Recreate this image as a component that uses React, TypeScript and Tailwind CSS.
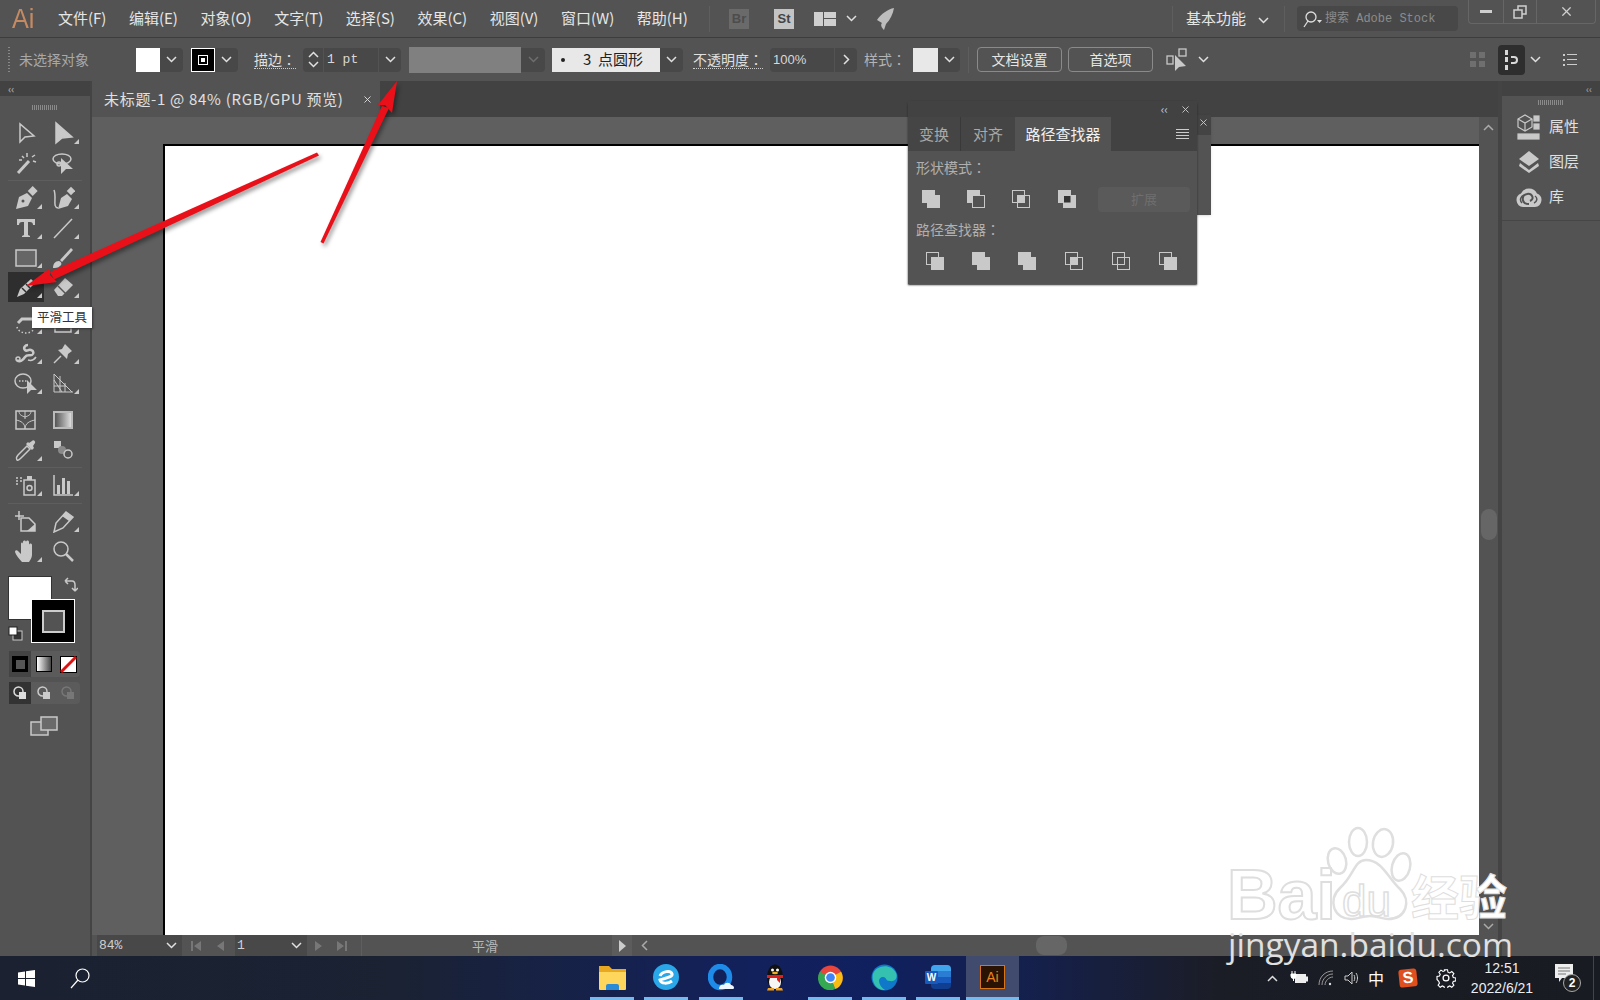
import type { ReactNode } from 'react';
import { X } from 'lucide-react';

const CJK = 'font-["Noto_Sans_CJK_SC","Liberation_Sans",sans-serif]';
const MONO = 'font-["Liberation_Mono","Noto_Sans_CJK_SC",monospace]';
const G = '#c9c9c9';

// ── Small shared bits ────────────────────────────────────────────────────────
function Chev({ color = '#e0e0e0', up = false }: { color?: string; up?: boolean }) {
  return (
    <svg width="11" height="7" viewBox="0 0 11 7">
      <polyline points={up ? '1,6 5.5,1.5 10,6' : '1,1 5.5,5.5 10,1'} fill="none" stroke={color} strokeWidth="1.5" />
    </svg>
  );
}

function Drop({ w = 23, color }: { w?: number; color?: string }) {
  return (
    <div className="flex h-[24px] items-center justify-center rounded-r-sm bg-[#484848]" style={{ width: w }}>
      <Chev color={color} />
    </div>
  );
}

// the fullwidth colon sits centred in the TC face, as it does in the screenshot
function Colon() {
  return <span className='font-["Noto_Sans_CJK_TC",sans-serif]'>：</span>;
}

function Gripper() {
  return <div className="h-[5px] w-[26px] bg-[repeating-linear-gradient(90deg,#8a8a8a_0_1px,transparent_1px_2px)]" />;
}

function Tool({ children, corner = true, active = false }: { children: ReactNode; corner?: boolean; active?: boolean }) {
  return (
    <div className={`relative flex h-full w-[36px] items-center justify-center ${active ? 'bg-[#2e2e2e]' : ''}`}>
      {children}
      {corner && <div className="absolute bottom-[4px] right-[2px] h-0 w-0 border-b-[5px] border-l-[5px] border-b-[#c9c9c9] border-l-transparent" />}
    </div>
  );
}

function Row({ h = 30, children }: { h?: number; children: ReactNode }) {
  return (
    <div className="flex gap-px pl-2" style={{ height: h }}>
      {children}
    </div>
  );
}

function Sep() {
  return <div className="mx-2 my-[2px] h-px bg-[#5e5e5e]" />;
}

function Ico({ children, s = 24 }: { children: ReactNode; s?: number }) {
  return (
    <svg width={s} height={s} viewBox="0 0 24 24" fill="none" stroke={G} strokeWidth="1.5">
      {children}
    </svg>
  );
}

// ── Left tool bar ────────────────────────────────────────────────────────────
function ToolBar() {
  return (
    <aside className="flex w-[92px] shrink-0 flex-col border-r-2 border-[#444] bg-[#535353]">
      <div className="flex h-[15px] items-center bg-[#424242] pl-2 text-[10px] leading-none text-[#aaa]">‹‹</div>
      <div className="flex h-[22px] items-center justify-center">
        <Gripper />
      </div>
      <Row>
        <Tool corner={false}><Ico><polygon points="6,3 6,21 11,16 20,15" /></Ico></Tool>
        <Tool><Ico><polygon points="5,2 5,22 11,17 21,16" fill={G} /></Ico></Tool>
      </Row>
      <Row>
        <Tool corner={false}><Ico><path d="M4 22 15 10" strokeWidth="3" /><path d="M8 5l2 2M5 9l3 0M13 2l0 4M18 6l3-2M19 10l3 1" /></Ico></Tool>
        <Tool corner={false}><Ico><ellipse cx="11" cy="8" rx="9" ry="5" /><circle cx="8" cy="13" r="2" /><polygon points="10,7 10,23 15,18 22,18" fill={G} stroke="none" /></Ico></Tool>
      </Row>
      <Sep />
      <Row>
        <Tool><Ico><path d="M2 23 5 11 13 7 18 12 14 20Z" fill={G} stroke="none" /><rect x="15" y="1" width="7" height="7" transform="rotate(45 18 5)" fill={G} stroke="none" /><circle cx="9" cy="15" r="1.5" fill="#535353" stroke="none" /></Ico></Tool>
        <Tool><Ico><path d="M7 22C1 21 6 12 3 4" /><path d="M7 23 10 12 16 8 21 13 17 20Z" fill={G} stroke="none" /><rect x="17" y="2" width="6" height="6" transform="rotate(45 20 5)" fill={G} stroke="none" /></Ico></Tool>
      </Row>
      <Row>
        <Tool><svg width="24" height="24" viewBox="0 0 24 24" fill={G}><path d="M3 3h18v6h-2c0-2-1-3-3-3h-2v13l2 1v1H8v-1l2-1V6H8C6 6 5 7 5 9H3Z" /></svg></Tool>
        <Tool><Ico s={24}><path d="M3 22 21 3" /></Ico></Tool>
      </Row>
      <Row h={29}>
        <Tool><svg width="22" height="18" viewBox="0 0 22 18"><rect x="1" y="1" width="20" height="16" fill="#666" stroke={G} strokeWidth="1.5" /></svg></Tool>
        <Tool><Ico><path d="M2 22c0-4 2-7 6-7 3 1 3 4 1 5-2 2-5 2-7 2Z" fill={G} stroke="none" /><path d="M9 14 20 2l2 2-11 12Z" fill={G} stroke="none" /></Ico></Tool>
      </Row>
      <Row>
        <Tool active><Ico><path d="M3 22 6 14 17 4 21 8 10 19Z" fill={G} stroke="none" /><path d="M8 13l4 4M12 9l4 4" stroke="#2e2e2e" /></Ico></Tool>
        <Tool><Ico><path d="M3 15 14 3 22 10 11 21H7Z" fill={G} stroke="none" /><path d="M7 11l8 8" stroke="#535353" /></Ico></Tool>
      </Row>
      <div className="h-[6px]" />
      <Row>
        <Tool><Ico><path d="M18 8H8L4 12" strokeWidth="3" /><path d="M3 16a9 7 0 0 0 17 2" strokeDasharray="1.5 2" /></Ico></Tool>
        <Tool><Ico><rect x="4" y="8" width="16" height="13" /></Ico></Tool>
      </Row>
      <Row>
        <Tool><Ico><path d="M3 19c3 3 6 0 8-3s5-1 7-2 2-4-1-5-4 2-6 0 0-5 3-5" strokeWidth="2.500" /><circle cx="4" cy="18" r="2" /><path d="M14 19c3 1 6 0 8-3" /></Ico></Tool>
        <Tool><Ico><path d="M3 22 10 15" /><path d="M7 9 16 18 17 13 21 10 14 3 11 8Z" fill={G} stroke="none" /></Ico></Tool>
      </Row>
      <Row>
        <Tool><Ico><ellipse cx="9" cy="10" rx="8" ry="7" /><path d="M5 10h8" strokeDasharray="1.5 1.5" /><polygon points="13,9 13,23 17,19 23,19" fill={G} stroke="none" /></Ico></Tool>
        <Tool><Ico><path d="M3 3v18h19M3 3l18 18M3 9l8 12M3 15h12M9 5v16M14 12v9" strokeWidth="1" /></Ico></Tool>
      </Row>
      <div className="h-[7px]" />
      <Row>
        <Tool corner={false}><Ico><rect x="2" y="3" width="19" height="18" /><path d="M11 21c0-6-4-8-9-9M11 21c0-6 5-8 10-9M11 3v8M5 3c0 4 3 5 6 6M17 3c0 4-3 5-6 6" strokeWidth="1" /></Ico></Tool>
        <Tool corner={false}><div className="h-[18px] w-[20px] border-2 border-[#bbb] bg-[linear-gradient(90deg,#555,#ddd)]" /></Tool>
      </Row>
      <Row>
        <Tool><Ico><path d="M3 22c-1-2 0-4 1-5L13 8l3 3-9 9c-1 1-3 3-4 2Z" /><path d="M12 6l6 6 2-2-1-2 2-3c1-2-2-4-3-2l-3 2-1-1Z" fill={G} stroke="none" /></Ico></Tool>
        <Tool corner={false}><Ico><rect x="3" y="3" width="7" height="7" fill={G} stroke="none" /><circle cx="11" cy="12" r="4" fill="#8a8a8a" stroke="none" /><circle cx="17" cy="16" r="4" /></Ico></Tool>
      </Row>
      <Sep />
      <Row>
        <Tool><Ico><path d="M2 5h2M6 5h2M2 8h2M6 8h2M2 11h2" /><rect x="10" y="7" width="11" height="15" /><circle cx="15.5" cy="15" r="2.5" /><rect x="13" y="3" width="5" height="4" fill={G} stroke="none" /></Ico></Tool>
        <Tool><Ico><path d="M3 2v20h19" /><rect x="6" y="12" width="3" height="9" fill={G} stroke="none" /><rect x="11" y="5" width="3" height="16" fill={G} stroke="none" /><rect x="16" y="8" width="3" height="13" fill={G} stroke="none" /></Ico></Tool>
      </Row>
      <div className="h-px" />
      <Sep />
      <Row>
        <Tool corner={false}><Ico><path d="M1 7h9M5 2v9" /><path d="M7 9h8l6 6v7H7Z" /><path d="M21 15v7h-8Z" fill={G} stroke="none" /></Ico></Tool>
        <Tool><Ico><path d="M3 23 5 14 15 3 22 8 12 19Z" /><path d="M15 3 22 8 18 12 11 7Z" fill={G} stroke="none" /></Ico></Tool>
      </Row>
      <Row>
        <Tool><svg width="24" height="24" viewBox="0 0 24 24" fill={G}><path d="M8 23C5 20 2 16 1 13c0-2 2-2 3-1l3 3V5c0-2 2-2 2 0v5V3c0-2 3-2 3 0v7V3c0-2 3-2 3 0v8V6c0-2 3-2 3 0v10c0 3-2 5-3 7Z" /></svg></Tool>
        <Tool corner={false}><Ico><circle cx="10" cy="10" r="7" /><path d="M15 15 22 22" strokeWidth="2.5" /></Ico></Tool>
      </Row>

      {/* Fill and stroke */}
      <div className="relative ml-2 mt-[10px] h-[66px] w-[74px]">
        <div className="h-[44px] w-[44px] border border-[#333] bg-white" />
        <div className="absolute left-[23px] top-[23px] flex h-[44px] w-[44px] items-center justify-center border border-white bg-black">
          <div className="h-[23px] w-[23px] border-2 border-[#ccc] bg-[#535353]" />
        </div>
        <svg className="absolute left-[56px] top-[1px]" width="14" height="16" viewBox="0 0 14 16" fill="none" stroke={G} strokeWidth="1.5">
          <path d="M1 4h7c2 0 3 2 3 4v5M1 4l3-3M1 4l3 3M11 14l3-3M11 14l-3-3" />
        </svg>
        <svg className="absolute left-0 top-[50px]" width="15" height="15" viewBox="0 0 15 15">
          <rect x="5" y="5" width="9" height="9" fill="#333" stroke={G} />
          <rect x="1" y="1" width="8" height="8" fill="#fff" stroke="#222" />
        </svg>
      </div>

      <div className="ml-[9px] mt-[9px] flex h-[26px] w-[71px] rounded-sm bg-[#5b5b5b]">
        <div className="flex h-full w-[22px] items-center justify-center bg-[#444]"><div className="flex h-[16px] w-[16px] items-center justify-center bg-black"><div className="h-[9px] w-[9px] bg-[#555]" /></div></div>
        <div className="flex h-full w-[25px] items-center justify-center"><div className="h-[16px] w-[16px] border border-black bg-[linear-gradient(90deg,#fff,#444)]" /></div>
        <div className="flex h-full w-[24px] items-center justify-center">
          <svg width="17" height="17" viewBox="0 0 17 17"><rect x="0.5" y="0.5" width="16" height="16" fill="#fff" stroke="#000" /><path d="M1 16 16 1" stroke="#e01010" strokeWidth="3" /></svg>
        </div>
      </div>
      <div className="ml-[9px] mt-[5px] flex h-[22px] w-[71px] rounded-sm bg-[#5b5b5b]">
        <div className="flex h-full w-[22px] items-center justify-center bg-[#333]"><DrawMode c="#ddd" /></div>
        <div className="flex h-full w-[25px] items-center justify-center"><DrawMode c="#ccc" /></div>
        <div className="flex h-full w-[24px] items-center justify-center"><DrawMode c="#777" /></div>
      </div>
      <div className="mt-[12px] flex justify-center pl-[1px] pr-[3px]">
        <svg width="28" height="20" viewBox="0 0 28 20" fill="#6a6a6a" stroke={G} strokeWidth="1.5">
          <rect x="1" y="6" width="17" height="13" />
          <rect x="11" y="1" width="16" height="13" />
        </svg>
      </div>
    </aside>
  );
}

function DrawMode({ c }: { c: string }) {
  return (
    <svg width="14" height="14" viewBox="0 0 14 14">
      <circle cx="5.5" cy="5.5" r="4.5" fill="none" stroke={c} strokeWidth="1.5" />
      <rect x="6" y="6" width="7" height="7" fill={c} />
    </svg>
  );
}

// ── Pathfinder buttons ───────────────────────────────────────────────────────
function Pf({ back, front, mid, open = false }: { back: boolean; front: boolean; mid?: string; open?: boolean }) {
  return (
    <svg width="18" height="18" viewBox="0 0 18 18">
      <rect x="0.5" y="0.5" width="12" height="12" fill={back ? G : open ? 'none' : '#535353'} stroke={G} />
      <rect x="5.5" y="5.5" width="12" height="12" fill={front ? G : open ? 'none' : '#535353'} stroke={G} />
      {mid && <rect x="6" y="6" width="6.500" height="6.500" fill={mid} />}
    </svg>
  );
}

function FloatingPanel() {
  return (
    <>
      {/* The collapsed panel peeking out behind */}
      <div className="absolute left-[1190px] top-[115px] h-[100px] w-[21px] bg-[#535353] shadow">
        <div className="flex h-[20px] items-start justify-end bg-[#444] pr-[2px] pt-[2px] text-[#ccc]"><X size={11} /></div>
      </div>
      <div className={`absolute left-[908px] top-[101px] h-[183px] w-[289px] rounded-t-sm bg-[#535353] shadow-[0_1px_2px_#222] ${CJK}`}>
        <div className="flex h-[16px] items-center justify-end gap-[12px] bg-[#424242] pr-[6px] text-[#ccc]">
          <span className="text-[12px] leading-none">‹‹</span>
          <X size={11} />
        </div>
        <div className="flex h-[34px] bg-[#424242] text-[15px] leading-[34px]">
          <div className="w-[53px] border-r border-[#393939] bg-[#454545] text-center text-[#a8a8a8]">变换</div>
          <div className="w-[54px] bg-[#454545] text-center text-[#a8a8a8]">对齐</div>
          <div className="w-[96px] bg-[#535353] text-center text-[#f0f0f0]">路径查找器</div>
          <div className="flex flex-1 items-center justify-end pr-[8px]">
            <div className="flex w-[13px] flex-col gap-[2px]">
              <div className="h-px bg-[#ccc]" /><div className="h-px bg-[#ccc]" /><div className="h-px bg-[#ccc]" /><div className="h-px bg-[#ccc]" />
            </div>
          </div>
        </div>
        <div className="px-[8px] pt-[6px] text-[14px] leading-[20px] text-[#b0b0b0]">形状模式<Colon /></div>
        <div className="mt-[9px] flex h-[26px] items-center pl-[14px]">
          <div className="flex w-[45px]"><Pf back front /></div>
          <div className="flex w-[45px]"><Pf back front={false} /></div>
          <div className="flex w-[46px]"><Pf back={false} front={false} mid={G} open /></div>
          <div className="flex w-[40px]"><Pf back front mid="#333" /></div>
          <div className="flex h-[25px] w-[92px] items-center justify-center rounded-sm bg-[#5a5a5a] text-[13px] text-[#6f6f6f]">扩展</div>
        </div>
        <div className="px-[8px] pt-[7px] text-[14px] leading-[20px] text-[#b0b0b0]">路径查找器<Colon /></div>
        <div className="mt-[13px] flex items-center pl-[18px]">
          <div className="flex w-[46px]"><Pf back={false} front /></div>
          <div className="flex w-[46px]"><Pf back front /></div>
          <div className="flex w-[47px]"><Pf back front /></div>
          <div className="flex w-[47px]"><Pf back={false} front={false} mid={G} open /></div>
          <div className="flex w-[47px]"><Pf back={false} front={false} open /></div>
          <div className="flex"><Pf back={false} front /></div>
        </div>
      </div>
    </>
  );
}

// ── Top bars ─────────────────────────────────────────────────────────────────
const menus = ['文件(F)', '编辑(E)', '对象(O)', '文字(T)', '选择(S)', '效果(C)', '视图(V)', '窗口(W)', '帮助(H)'];

function MenuBar() {
  return (
    <header className={`flex h-[38px] shrink-0 items-center border-b border-[#3d3d3d] bg-[#535353] ${CJK}`}>
      <div className="ml-[12px] w-[46px] origin-left scale-x-90 font-['Liberation_Sans',sans-serif] text-[28px] leading-none text-[#c58a62]">Ai</div>
      <nav className="flex w-[651px] gap-[22.5px] text-[15px] text-[#e6e6e6]">
        {menus.map(m => (
          <span key={m}>{m}</span>
        ))}
      </nav>
      <div className="h-[26px] w-px bg-[#5e5e5e]" />
      <div className="ml-[19px] flex h-[20px] w-[20px] items-center justify-center bg-[#6a6a6a] font-['Liberation_Sans',sans-serif] text-[13px] font-bold text-[#4d4d4d]">Br</div>
      <div className="ml-[25px] flex h-[20px] w-[20px] items-center justify-center bg-[#c4c4c4] font-['Liberation_Sans',sans-serif] text-[13px] font-bold text-[#444]">St</div>
      <svg className="ml-[20px]" width="22" height="14" viewBox="0 0 22 14" fill="#cfcfcf">
        <rect width="9" height="14" /><rect x="10" width="12" height="6" /><rect x="10" y="7" width="12" height="7" />
      </svg>
      <div className="ml-[10px]"><Chev /></div>
      <svg className="ml-[17px]" width="24" height="24" viewBox="0 0 24 24" fill="#bdbdbd">
        <path d="M20 1C14 2 7 7 3 13l5 3C6 18 8 21 10 23l2-6c4-4 7-10 8-16Z" />
      </svg>
      <div className="flex-1" />
      <div className="h-[26px] w-px bg-[#5e5e5e]" />
      <span className="ml-[13px] text-[15px] text-[#e6e6e6]">基本功能</span>
      <div className="ml-[12px] mt-[4px]"><Chev /></div>
      <div className="ml-[15px] h-[26px] w-px bg-[#5e5e5e]" />
      <div className={`ml-[12px] flex h-[25px] w-[161px] items-center rounded-sm bg-[#484848] pl-[6px] text-[12px] text-[#8c8c8c] ${MONO}`}>
        <svg width="20" height="18" viewBox="0 0 20 18" fill="none" stroke="#ddd" strokeWidth="1.3">
          <circle cx="8" cy="7" r="5" /><path d="M5 11 1 17" /><path d="M14 10h5l-2.5 3Z" fill="#ddd" stroke="none" />
        </svg>
        <span className="ml-[2px]">搜索 Adobe Stock</span>
      </div>
      <div className="mb-[13px] ml-[10px] mr-[4px] flex h-[24px] w-[128px] rounded-b-sm border border-t-0 border-[#666] text-[#cfcfcf]">
        <div className="flex w-[35px] items-center justify-center border-r border-[#666]"><div className="h-[3px] w-[12px] bg-[#cfcfcf]" /></div>
        <div className="flex w-[33px] items-center justify-center border-r border-[#666]">
          <svg width="14" height="14" viewBox="0 0 14 14" fill="none" stroke="#cfcfcf" strokeWidth="1.5"><rect x="1" y="5" width="8" height="8" /><path d="M5 5V1h8v8H9" /></svg>
        </div>
        <div className="flex flex-1 items-center justify-center"><X size={15} strokeWidth={2} /></div>
      </div>
    </header>
  );
}

function ControlBar() {
  const label = 'border-b border-dotted border-[#ccc] text-[14px] leading-[18px] text-[#e0e0e0]';
  return (
    <div className={`flex h-[43px] shrink-0 items-center bg-[#535353] ${CJK}`}>
      <div className="ml-[8px] h-[26px] w-[2px] bg-[repeating-linear-gradient(180deg,#888_0_1px,transparent_1px_3px)]" />
      <span className="ml-[9px] w-[117px] text-[14px] text-[#a8a8a8]">未选择对象</span>
      <div className="h-[24px] w-[24px] bg-white" />
      <Drop />
      <div className="ml-[8px] flex h-[24px] w-[24px] items-center justify-center border border-white bg-black">
        <div className="flex h-[10px] w-[10px] items-center justify-center border border-white"><div className="h-[4px] w-[4px] bg-white" /></div>
      </div>
      <Drop />
      <span className={`ml-[16px] ${label}`}>描边<Colon /></span>
      <div className="ml-[7px] flex h-[24px] w-[20px] flex-col items-center justify-center gap-[3px] rounded-l-sm bg-[#484848]">
        <Chev up /><Chev />
      </div>
      <div className={`ml-px flex h-[24px] w-[54px] items-center bg-[#484848] pl-[3px] text-[13px] text-[#d8d8d8] ${MONO}`}>1 pt</div>
      <div className="ml-px"><Drop w={22} /></div>
      <div className="ml-[8px] h-[26px] w-[112px] bg-[#808080]" />
      <Drop w={24} color="#6e6e6e" />
      <div className="ml-[7px] flex h-[24px] w-[108px] items-center whitespace-pre bg-[#e8e8e8] pl-[9px] text-[15px] text-[#222]">
        <div className="mr-[18px] h-[4px] w-[4px] rounded-full bg-[#222]" />3  点圆形
      </div>
      <Drop />
      <span className={`ml-[10px] ${label}`}>不透明度<Colon /></span>
      <div className="ml-[7px] flex h-[24px] w-[64px] items-center rounded-l-sm bg-[#484848] pl-[3px] font-['Liberation_Sans',sans-serif] text-[13px] text-[#d8d8d8]">100%</div>
      <div className="ml-px flex h-[24px] w-[22px] items-center justify-center rounded-r-sm bg-[#484848]">
        <div className="-rotate-90"><Chev /></div>
      </div>
      <span className="ml-[7px] w-[49px] text-[14px] text-[#b4b4b4]">样式<Colon /></span>
      <div className="h-[24px] w-[25px] bg-[#e8e8e8]" />
      <Drop w={22} />
      <div className="ml-[8px] h-[26px] w-px bg-[#5e5e5e]" />
      <button className="ml-[8px] h-[25px] w-[85px] rounded-sm border border-[#8a8a8a] text-[14px] text-[#e6e6e6]">文档设置</button>
      <button className="ml-[6px] h-[25px] w-[85px] rounded-sm border border-[#8a8a8a] text-[14px] text-[#e6e6e6]">首选项</button>
      <svg className="ml-[13px]" width="26" height="24" viewBox="0 0 26 24" fill="none" stroke="#c9c9c9" strokeWidth="1.3">
        <rect x="1" y="8" width="6" height="8" /><rect x="13" y="1" width="7" height="7" /><polygon points="9,7 9,23 13,19 20,18" fill="#c9c9c9" stroke="none" />
      </svg>
      <div className="ml-[6px]"><Chev /></div>
      <div className="flex-1" />
      <svg width="20" height="20" viewBox="0 0 20 20" fill="#6f6f6f">
        <rect width="6" height="6" x="1" y="2" /><rect width="6" height="6" x="10" y="2" /><rect width="6" height="6" x="1" y="11" /><rect width="6" height="6" x="10" y="11" />
      </svg>
      <div className="ml-[9px] flex h-[30px] w-[27px] items-center justify-center rounded-sm bg-[#2e2e2e]">
        <svg width="18" height="20" viewBox="0 0 18 20" fill="#d8d8d8">
          <rect x="2" y="0" width="3" height="5" /><rect x="2" y="7" width="3" height="5" /><rect x="2" y="15" width="3" height="5" />
          <path d="M8 6h3a4 4 0 0 1 0 8H8v-2h3a2 2 0 0 0 0-4H8Z" />
        </svg>
      </div>
      <div className="ml-[5px]"><Chev /></div>
      <div className="ml-[22px] mr-[23px] flex flex-col gap-[3px]">
        {[0, 1, 2].map(i => (
          <div key={i} className="flex items-center gap-[2px]">
            <div className="h-[2px] w-[2px] bg-[#ccc]" />
            <div className="h-px w-[10px] bg-[#ccc]" />
          </div>
        ))}
      </div>
    </div>
  );
}

function RightDock() {
  const items: [ReactNode, string][] = [
    [
      <svg width="24" height="26" viewBox="0 0 24 26" fill="none" stroke={G} strokeWidth="1.2"><path d="M1 5l7-4 7 4v8l-7 4-7-4Z" /><path d="M1 5l7 4 7-4M8 9v8" /><rect x="17" y="2" width="5" height="5" fill={G} /><rect x="17" y="10" width="5" height="5" fill={G} /><rect x="1" y="20" width="21" height="5" fill={G} /></svg>,
      '属性',
    ],
    [
      <svg width="22" height="24" viewBox="0 0 22 24" fill={G}><path d="M11 1 21 9l-10 7L1 9Z" /><path d="M2 13l9 7 9-7 1 3-10 7L1 16Z" /></svg>,
      '图层',
    ],
    [
      <svg width="28" height="20" viewBox="0 0 28 20"><path d="M8 20A7 7 0 0 1 6 6.500 9 9 0 0 1 22 6.500 7 7 0 0 1 20 20Z" fill={G} /><path d="M14 17c-8 0-8-9-2-10 5-1 8 5 3 7" fill="none" stroke="#535353" strokeWidth="2" /><path d="M7 16c-3-3-1-7 2-8M19 16c3-1 4-5 1-7" fill="none" stroke="#535353" strokeWidth="1.500" /></svg>,
      '库',
    ],
  ];
  return (
    <aside className={`flex w-[98px] shrink-0 flex-col bg-[#535353] ${CJK}`}>
      <div className="flex h-[15px] items-center justify-end bg-[#424242] pr-[8px] text-[10px] leading-none text-[#aaa]">‹‹</div>
      <div className="flex h-[13px] items-center justify-center"><Gripper /></div>
      {items.map(([icon, name]) => (
        <div key={name} className="flex h-[35px] items-center pl-[7px]">
          <div className="flex w-[39px] justify-center">{icon}</div>
          <span className="ml-[1px] text-[15px] text-[#e0e0e0]">{name}</span>
        </div>
      ))}
      <div className="mt-[6px] h-px bg-[#464646]" />
    </aside>
  );
}

function StatusBar() {
  return (
    <div className={`flex h-[21px] shrink-0 items-center bg-[#535353] pl-[5px] text-[13px] ${MONO}`}>
      <div className="flex h-full w-[63px] items-center bg-[#484848] pl-[2px] text-[#d0d0d0]">84%</div>
      <div className="flex h-full w-[22px] items-center justify-center bg-[#484848]"><Chev /></div>
      <svg className="ml-[9px]" width="40" height="12" viewBox="0 0 40 12" fill="#777">
        <rect x="0" y="1" width="2" height="10" /><path d="M3 6l7-5v10ZM26 6l7-5v10Z" />
      </svg>
      <div className="ml-[4px] flex h-full w-[50px] items-center bg-[#484848] pl-[2px] text-[#d0d0d0]">1</div>
      <div className="flex h-full w-[22px] items-center justify-center bg-[#484848]"><Chev /></div>
      <svg className="ml-[8px]" width="40" height="12" viewBox="0 0 40 12" fill="#777">
        <path d="M0 1l7 5-7 5ZM22 1l7 5-7 5Z" /><rect x="30" y="1" width="2" height="10" />
      </svg>
      <div className="ml-[6px] h-full w-px bg-[#5e5e5e]" />
      <div className={`w-[250px] pr-[4px] text-center text-[13px] text-[#b8b8b8] ${CJK}`}>平滑</div>
      <div className="flex h-full w-[20px] items-center justify-center bg-[#5c5c5c]">
        <div className="h-0 w-0 border-y-[6px] border-l-[7px] border-y-transparent border-l-[#ccc]" />
      </div>
      <div className="ml-[7px] rotate-90"><Chev color="#aaa" /></div>
      <div className="flex flex-1 justify-start pl-[386px]">
        <div className="h-[19px] w-[31px] rounded-lg bg-[#666]" />
      </div>
    </div>
  );
}

// ── Windows taskbar ──────────────────────────────────────────────────────────
function Slot({ children, on = true, className = 'mr-[10px] w-[44px]' }: { children: ReactNode; on?: boolean; className?: string }) {
  return (
    <div className={`relative flex h-full items-center justify-center pb-[2px] ${className}`}>
      {children}
      {on && <div className="absolute bottom-0 left-0 right-0 h-[3px] bg-[#76b9ed]" />}
    </div>
  );
}

function TaskBar() {
  return (
    <footer className={`flex h-[44px] shrink-0 items-center bg-[linear-gradient(90deg,#1b2130_0%,#1a2233_25%,#13215a_45%,#10205f_55%,#15204a_65%,#1b1d26_76%,#191b22_100%)] ${CJK}`}>
      <div className="flex w-[590px] items-center">
        <svg className="ml-[18px]" width="17" height="17" viewBox="0 0 17 17" fill="#fff">
          <path d="M0 2.500 7 1.500v6.500H0ZM8 1.300 17 0v8H8ZM0 9h7v6.500L0 14.500ZM8 9h9v8l-9-1.300Z" />
        </svg>
        <svg className="ml-[34px]" width="22" height="22" viewBox="0 0 22 22" fill="none" stroke="#fff" strokeWidth="1.2">
          <circle cx="13.5" cy="8.5" r="6.5" /><path d="M9 13 2 21" />
        </svg>
      </div>
      <div className="flex h-full items-stretch">
        <Slot>
          <svg width="27" height="25" viewBox="0 0 27 25"><path d="M0 1h10l3 3h14v20H0Z" fill="#e8a820" /><path d="M0 7h27v17a1 1 0 0 1-1 1H1a1 1 0 0 1-1-1Z" fill="#ffd65c" /><path d="M7 21a2 2 0 0 1 2-2h9a2 2 0 0 1 2 2v4H7Z" fill="#2b8ad6" /></svg>
        </Slot>
        <Slot className="mr-[11px] w-[44px]">
          <svg width="26" height="26" viewBox="0 0 26 26"><circle cx="13" cy="13" r="13" fill="#2aa7e8" /><path d="M7 12c2-5 11-6 12-2 1 3-7 4-12 6 1 4 8 4 12 1" fill="none" stroke="#fff" strokeWidth="3" /></svg>
        </Slot>
        <Slot>
          <svg width="27" height="27" viewBox="0 0 27 27"><ellipse cx="12" cy="13" rx="9.500" ry="10.500" fill="none" stroke="#1e8be8" strokeWidth="5.500" /><path d="M11 25c0-4 3-5 5-4 1-3 6-3 7 0 3 0 4 4 2 4Z" fill="#eef6ff" /></svg>
        </Slot>
        <Slot on={false} className="mr-[11px] w-[44px]">
          <svg width="22" height="27" viewBox="0 0 22 27">
            <ellipse cx="11" cy="13" rx="8" ry="12.500" fill="#111" />
            <ellipse cx="11" cy="18" rx="6" ry="7" fill="#f6f6f6" />
            <circle cx="8.500" cy="6" r="1.500" fill="#fff" /><circle cx="13.500" cy="6" r="1.500" fill="#fff" />
            <ellipse cx="11" cy="9" rx="3" ry="1.300" fill="#f0b020" />
            <path d="M3 11h16v3h-3v5l-3-3v-2H3Z" fill="#e02020" />
            <path d="M4 24h6v2.500H3ZM12 24h6l1 2.500h-7Z" fill="#f0a020" />
          </svg>
        </Slot>
        <Slot>
          <svg width="25" height="25" viewBox="0 0 26 26"><circle cx="13" cy="13" r="12.500" fill="#e8453c" /><path d="M13 13 24 7a12.500 12.500 0 0 1-6 18Z" fill="#f9bc15" /><path d="M13 13 18 25A12.500 12.500 0 0 1 2 7Z" fill="#34a853" /><circle cx="13" cy="13" r="6" fill="#fff" /><circle cx="13" cy="13" r="4.500" fill="#4285f4" /></svg>
        </Slot>
        <Slot>
          <svg width="27" height="27" viewBox="0 0 27 27"><circle cx="13.500" cy="13.500" r="13" fill="#0f78c8" /><path d="M2 10C5 1 20-1 25 9c2 5-1 9-6 8-5 0-3-4-7-4-6 0-5 9 2 13C6 27 0 18 2 10Z" fill="#35c1b0" /></svg>
        </Slot>
        <Slot>
          <div className="relative h-[24px] w-[26px]">
            <div className="absolute right-0 top-0 h-[24px] w-[20px] rounded-sm bg-[linear-gradient(180deg,#41a5ee_0_25%,#2b7cd3_25%_50%,#185abd_50%_75%,#103f91_75%)]" />
            <div className="absolute left-0 top-[6px] flex h-[13px] w-[13px] items-center justify-center rounded-[1px] bg-[#185abd] font-['Liberation_Sans',sans-serif] text-[10px] font-bold leading-none text-white">W</div>
          </div>
        </Slot>
        <Slot className="-ml-[4px] w-[53px] bg-[#414b6e]">
          <div className="flex h-[24px] w-[25px] items-center justify-center border border-[#d8741a] bg-[#2a1303] font-['Liberation_Sans',sans-serif] text-[14px] leading-none text-[#e8831f]">Ai</div>
        </Slot>
      </div>
      <div className="flex-1" />
      <div className="flex h-full items-center text-white">
        <Chev color="#ddd" up />
        <svg className="ml-[12px]" width="18" height="14" viewBox="0 0 18 14"><rect x="5" y="3" width="11" height="9" fill="#eee" /><rect x="16" y="5.500" width="2" height="5" fill="#eee" /><path d="M2 0v3M5 0v3M1 3h5v2a2 2 0 0 1-5 0ZM3.500 7v3" stroke="#fff" fill="#fff" strokeWidth="1" /></svg>
        <svg className="ml-[10px]" width="16" height="16" viewBox="0 0 16 16" fill="none" stroke="#999" strokeWidth="1"><path d="M1 15C1 7 7 1 15 1M4 15c0-6 5-11 11-11M7 15c0-4 4-8 8-8" /><circle cx="12" cy="14" r="1.200" fill="#ddd" stroke="none" /></svg>
        <svg className="ml-[10px]" width="16" height="16" viewBox="0 0 16 16" fill="none" stroke="#ccc" strokeWidth="1"><path d="M1 6h3l4-4v12l-4-4H1ZM10 5c1 2 1 4 0 6M12 3c2 3 2 7 0 10" /></svg>
        <span className="ml-[8px] w-[16px] text-[16px] leading-none">中</span>
        <div className="ml-[15px] flex h-[18px] w-[18px] -rotate-6 items-center justify-center rounded-[3px] bg-[#e0501f] font-['Liberation_Sans',sans-serif] text-[16px] font-bold leading-none text-white">S</div>
        <svg className="ml-[19px]" width="20" height="20" viewBox="0 0 24 24" fill="none" stroke="#fff" strokeWidth="1.5"><circle cx="12" cy="12" r="3.500" /><path d="M10 1h4l.6 3.200 2.400 1 2.700-1.800 2.800 2.800-1.800 2.700 1 2.400 3.300.6v4l-3.300.6-1 2.400 1.800 2.700-2.800 2.800-2.700-1.800-2.400 1-.6 3.200h-4l-.6-3.200-2.400-1-2.700 1.800-2.800-2.800 1.800-2.700-1-2.400L0 14v-4l3.300-.6 1-2.400-1.800-2.700 2.800-2.800 2.700 1.800 2.400-1Z" transform="translate(1.200 1.200) scale(.9)" /></svg>
        <div className="ml-[15px] flex w-[62px] flex-col items-center font-['Liberation_Sans',sans-serif] text-[14px] leading-[20px] text-[#eee]">
          <span>12:51</span>
          <span>2022/6/21</span>
        </div>
        <div className="relative ml-[22px] h-[28px] w-[26px]">
          <svg width="18" height="20" viewBox="0 0 18 20"><path d="M0 0h18v14H7l-3 4v-4H0Z" fill="#eee" /><path d="M3 4h12M3 7h12M3 10h8" stroke="#777" /></svg>
          <div className="absolute bottom-0 right-0 flex h-[18px] w-[18px] items-center justify-center rounded-full border border-[#aaa] bg-[#222] font-['Liberation_Sans',sans-serif] text-[12px] font-bold leading-none text-white">2</div>
        </div>
        <div className="ml-[12px] mr-[6px] h-full w-px bg-[#444]" />
      </div>
    </footer>
  );
}

// ── Annotations ──────────────────────────────────────────────────────────────
function Arrows() {
  return (
    <svg className="pointer-events-none absolute left-0 top-0 drop-shadow-[2px_3px_2px_rgba(0,0,0,0.4)]" width="1600" height="1000" viewBox="0 0 1600 1000">
      <polygon points="317,152.500 319,155.500 54,279.500 50,272" fill="#ea1019" />
      <polygon points="26,286 50,268 50,275 57,282" fill="#ea1019" />
      <polygon points="320.500,242 323.500,243.500 389,108 382,106" fill="#ea1019" />
      <polygon points="397,81 378,105 385,105 392,113" fill="#ea1019" />
    </svg>
  );
}

function Watermark() {
  return (
    <>
      <svg className="pointer-events-none absolute left-[1324px] top-[826px]" width="90" height="96" viewBox="0 0 90 96" fill="none" stroke="#dfdfdf" strokeWidth="2.5">
        <ellipse cx="13" cy="35" rx="9" ry="13" transform="rotate(-15 13 35)" />
        <ellipse cx="34" cy="16" rx="9" ry="14" />
        <ellipse cx="59" cy="17" rx="10" ry="14" transform="rotate(10 59 17)" />
        <ellipse cx="77" cy="41" rx="9" ry="14" transform="rotate(15 77 41)" />
        <path d="M42 34C30 34 30 50 16 62 3 74 10 94 28 93c6 0 10-3 18-3 8 0 12 3 18 3 18 0 24-18 12-30C64 52 58 34 42 34Z" />
      </svg>
      <div className="pointer-events-none absolute left-[1227px] top-[856px] font-['Liberation_Sans',sans-serif] text-[70px] font-bold leading-[78px] text-transparent [-webkit-text-stroke:2px_#dedede]">Bai</div>
      <div className="pointer-events-none absolute left-[1342px] top-[876px] font-['Liberation_Sans',sans-serif] text-[44px] leading-[50px] text-transparent [-webkit-text-stroke:1.5px_#dedede]">du</div>
      <div className={`pointer-events-none absolute left-[1411px] top-[866px] text-[48px] font-bold leading-[56px] text-white [-webkit-text-stroke:1px_#dedede] ${CJK}`}>经验</div>
      <div className="pointer-events-none absolute left-[1228px] top-[921px] font-['Open_Sans','Liberation_Sans',sans-serif] text-[33.5px] font-medium leading-[46px] text-[#e0e0e0]">jingyan.baidu.com</div>
    </>
  );
}

// ── Main ─────────────────────────────────────────────────────────────────────
export default function App() {
  return (
    <div className="relative flex h-[1000px] w-[1600px] flex-col overflow-hidden bg-[#535353]">
      <MenuBar />
      <ControlBar />
      <div className="flex min-h-0 flex-1">
        <ToolBar />
        <main className="flex min-w-0 flex-1 flex-col">
          {/* Document tab */}
          <div className="flex h-[36px] shrink-0 bg-[#424242]">
            <div className={`flex w-[288px] items-center bg-[#535353] pl-[12px] text-[15px] tracking-[0.7px] text-[#e0e0e0] ${CJK}`}>
              <span className="w-[258px] whitespace-nowrap">未标题-1 @ 84% (RGB/GPU 预览)</span>
              <X size={11} strokeWidth={2} />
            </div>
          </div>
          <div className="flex min-h-0 flex-1">
            <div className="flex-1 bg-[#5f5f5f] pl-[71px] pt-[27px]">
              <div className="h-full w-full border-l-2 border-t-2 border-black bg-white" />
            </div>
            <div className="flex w-[19px] flex-col items-center bg-[#535353] pt-[7px]">
              <Chev color="#aaa" up />
              <div className="mt-[378px] h-[31px] w-[16px] rounded-lg bg-[#666]" />
              <div className="flex-1" />
              <div className="pb-[5px]"><Chev color="#aaa" /></div>
            </div>
          </div>
          <StatusBar />
        </main>
        <div className="w-[4px] shrink-0 bg-[#444]" />
        <RightDock />
      </div>
      <TaskBar />

      <FloatingPanel />
      <div className={`absolute left-[32px] top-[307px] flex h-[21px] w-[60px] items-center justify-center bg-white text-[12.500px] text-[#333] shadow-[1px_1px_2px_#333] ${CJK}`}>平滑工具</div>
      <Arrows />
      <Watermark />
    </div>
  );
}
